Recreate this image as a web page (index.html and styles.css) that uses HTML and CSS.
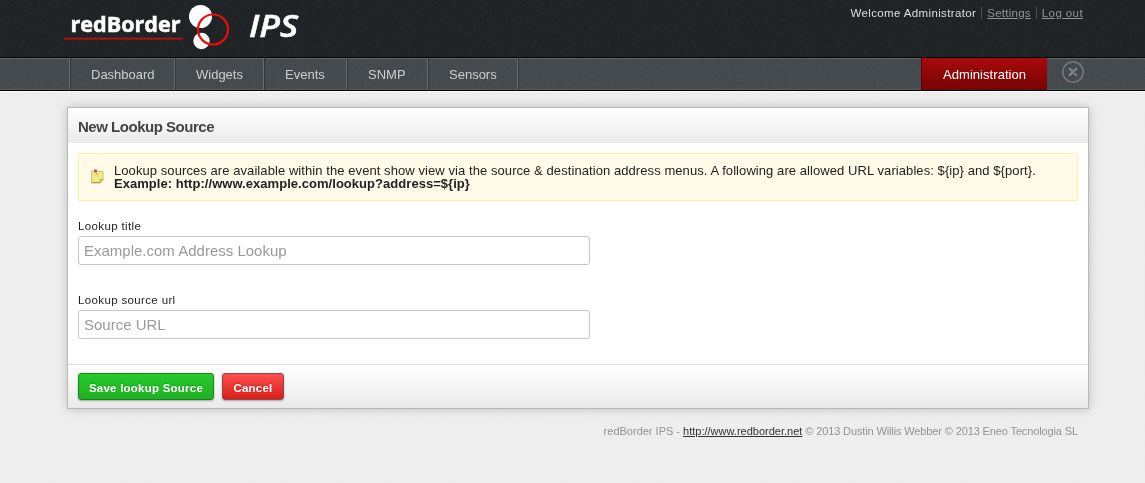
FILE: index.html
```html
<!DOCTYPE html>
<html lang="en">
<head>
<meta charset="utf-8">
<title>redBorder IPS - New Lookup Source</title>
<link rel="stylesheet" href="styles.css">
</head>
<body>
<header class="header">
  <div class="wrap header-row">
    <svg class="logo" width="240" height="54" viewBox="0 0 240 54">
      <text class="logo-name" x="6.500" y="31.500" textLength="110" lengthAdjust="spacingAndGlyphs">redBorder</text>
      <path d="M0 38.6H119" stroke="#c20a0f" stroke-width="1.6"/>
      <circle cx="136.5" cy="16.5" r="11.5" fill="#fff"/>
      <circle cx="137.500" cy="41" r="8.200" fill="#fff"/>
      <circle cx="149" cy="29.500" r="15" fill="none" stroke="#f00808" stroke-width="2.200"/>
      <text class="logo-ips" x="185" y="36.500" textLength="49" lengthAdjust="spacingAndGlyphs">IPS</text>
    </svg>
    <ul class="user-menu">
      <li class="welcome">Welcome Administrator</li>
      <li><a href="#" class="settings">Settings</a></li>
      <li><a href="#" class="logout">Log out</a></li>
    </ul>
  </div>
</header>
<nav class="nav">
  <div class="wrap nav-row">
    <ul class="tabs">
      <li class="t1"><span>Dashboard</span></li>
      <li class="t2"><span>Widgets</span></li>
      <li class="t3"><span>Events</span></li>
      <li class="t4"><span>SNMP</span></li>
      <li class="t5"><span>Sensors</span></li>
    </ul>
    <div class="admin"><span>Administration</span></div>
    <svg class="close" width="24" height="24" viewBox="0 0 24 24" fill="none">
      <circle cx="12" cy="12" r="10.200" stroke="#6d7072" stroke-width="1.800"/>
      <path d="M8.800 8.800l6.400 6.400M15.200 8.800l-6.400 6.400" stroke="#7a7d7f" stroke-width="2.400" stroke-linecap="round"/>
    </svg>
  </div>
</nav>
<main class="panel">
  <h1 class="title"><span>New Lookup Source</span></h1>
  <div class="body">
    <div class="note">
      <svg class="note-icon" width="13" height="15" viewBox="0 0 13 15">
        <path d="M.5 2.500h11.500v8.500l-3 3H.5z" fill="#f1ec8b" stroke="#cdc664"/>
        <path d="M.5 13.500h8.500l3-3" fill="none" stroke="#a59d48"/>
        <path d="M9 13.500v-3h3z" fill="#fffcc4" stroke="#aaa243" stroke-width=".8"/>
        <path d="M3 5h6M3 7h5" stroke="#ded778" stroke-width=".8"/>
        <path d="M5 4l1.500 1.500" stroke="#8c8a61" stroke-width=".8"/>
        <circle cx="4.500" cy="2" r="1.700" fill="#db4949"/>
      </svg>
      <p><span class="n1">Lookup sources are available within the event show view via the source &amp; destination address menus. A following are allowed URL variables: ${ip} and ${port}.</span><br><strong class="n2">Example: http://www.example.com/lookup?address=${ip}</strong></p>
    </div>
    <label class="l1" for="title">Lookup title</label>
    <input id="title" class="i1" type="text" placeholder="Example.com Address Lookup">
    <label class="l2" for="url">Lookup source url</label>
    <input id="url" class="i2" type="text" placeholder="Source URL">
  </div>
  <div class="actions">
    <button class="btn save"><span>Save lookup Source</span></button>
    <button class="btn cancel"><span>Cancel</span></button>
  </div>
</main>
<footer class="footer"><span>redBorder IPS - <a href="#">http://www.redborder.net</a><span class="copy"> © 2013 Dustin Willis Webber © 2013 Eneo Tecnologia SL</span></span></footer>
<svg class="grain" width="1145" height="483">
  <filter id="grain" x="0" y="0" width="1" height="1"><feTurbulence type="fractalNoise" baseFrequency=".5" numOctaves="2"/><feColorMatrix type="matrix" values="1 0 0 0 0 1 0 0 0 0 1 0 0 0 0 0 0 0 0 1"/></filter>
  <rect width="1145" height="483" filter="url(#grain)"/>
</svg>
</body>
</html>
```
FILE: styles.css
```css
* { box-sizing: border-box; }
html, body { height: 100%; }
body {
  margin: 0;
  background: #ededed;
  font: 13px/13px "Liberation Sans", Arial, sans-serif;
  color: #222;
  overflow: hidden;
}
ul, p, h1 { margin: 0; padding: 0; list-style: none; }
.wrap { width: 1021px; margin-left: 67px; }
.header { position: relative; height: 57px; background: #1c2023; }
.header-row { display: flex; justify-content: space-between; }
.logo { margin-left: -3px; overflow: visible; }
.logo-name { font: bold 21.5px "Open Sans", "Noto Sans", sans-serif; fill: #fff; stroke: #fff; stroke-width: .5px; }
.logo-ips { font: italic 600 31px "Open Sans", "Noto Sans", sans-serif; fill: #fff; stroke: #fff; stroke-width: .5px; }
.user-menu { display: flex; padding: 7px 5px 0 0; font-size: 11.5px; color: #ddd; }
.user-menu li { height: 12px; line-height: 12px; white-space: nowrap; }
.user-menu li + li { margin-left: 5px; padding-left: 5px; border-left: 1px solid #4b4e50; }
.user-menu a { color: #8f9192; }
.welcome { letter-spacing: .37px; }
.settings { letter-spacing: .25px; }
.logout { letter-spacing: .4px; }

.nav { position: relative; height: 34px; border-top: 1px solid #000; border-bottom: 1px solid #000; background: #404649; box-shadow: inset 0 1px #606263, inset 0 -1px #54595b, 0 1px #fff; }
.nav-row { display: flex; height: 32px; }
.tabs { display: flex; margin-left: 2px; border-left: 1px solid #64686a; }
.tabs li { padding: 10px 0 0 20px; border-left: 1px solid #2e3335; border-right: 1px solid #64686a; font-size: 13px; color: #ccc; }
.t1 { width: 105px; }
.t2 { width: 89px; }
.t3 { width: 83px; }
.t4 { width: 81px; }
.tabs .t5 { width: 90px; box-shadow: 1px 0 #2e3335; }
.admin { width: 126px; margin-left: auto; padding: 10px 0 0 21px; border-left: 1px solid #600; background: linear-gradient(#a50909, #730303); color: #fff; letter-spacing: .05px; }
.close { margin: 2px 3px 0 14px; }

.panel { position: relative; z-index: 2; width: 1022px; height: 302px; margin: 16px 0 0 67px; border: 1px solid #b9b9b9; background: #fff; box-shadow: 0 0 9px rgba(0,0,0,.2); }
.title { height: 35px; padding: 11px 10px 0; background: linear-gradient(#fff, #ebebeb); font-size: 15px; line-height: 15px; color: #444; letter-spacing: -.48px; }
.body { height: 221px; padding: 10px 10px 0; display: flex; flex-direction: column; align-items: flex-start; }
.note { width: 1000px; height: 48px; display: flex; padding: 10px 0 0 12px; border: 1px solid #faf3a0; background: #fffbe8; white-space: nowrap; }
.note-icon { margin: 5px 10px 0 0; }
.n1 { letter-spacing: .075px; }
.n2 { letter-spacing: .04px; }
label { height: 14px; line-height: 14px; font-size: 11.5px; letter-spacing: .36px; }
.l1 { margin-top: 18px; }
.l2 { margin-top: 28px; }
input { width: 512px; height: 29px; margin: 3px 0 0; padding: 0 5px; border: 1px solid #c5c5c5; border-radius: 3px; font: 15px "Liberation Sans", Arial, sans-serif; }
input::placeholder { color: #999; opacity: 1; }
.actions { height: 44px; display: flex; gap: 8px; padding: 8px 10px 0; border-top: 1px solid #ddd; background: linear-gradient(#fff, #eaeaea); }
.btn { height: 27px; padding: 3px 0 0; border-radius: 3px; color: #fff; font: bold 11.5px/14px "Liberation Sans", Arial, sans-serif; letter-spacing: .23px; box-shadow: 0 1px 2px rgba(0,0,0,.3); text-shadow: 0 -1px 1px rgba(0,0,0,.2); white-space: nowrap; }
.save { width: 136px; border: 1px solid #16861c; background: linear-gradient(#26ca2a, #20b124); }
.cancel { width: 62px; border: 1px solid #8d4848; background: linear-gradient(#ff4e51, #d91e18); }
.footer { position: relative; z-index: 2; width: 1078px; padding-top: 16px; text-align: right; font-size: 11px; color: #929292; white-space: nowrap; }
.footer a { color: #333; }
.copy { letter-spacing: -.125px; }
.grain { position: absolute; left: 0; top: 0; z-index: 1; opacity: .14; pointer-events: none; mix-blend-mode: soft-light; }
```
